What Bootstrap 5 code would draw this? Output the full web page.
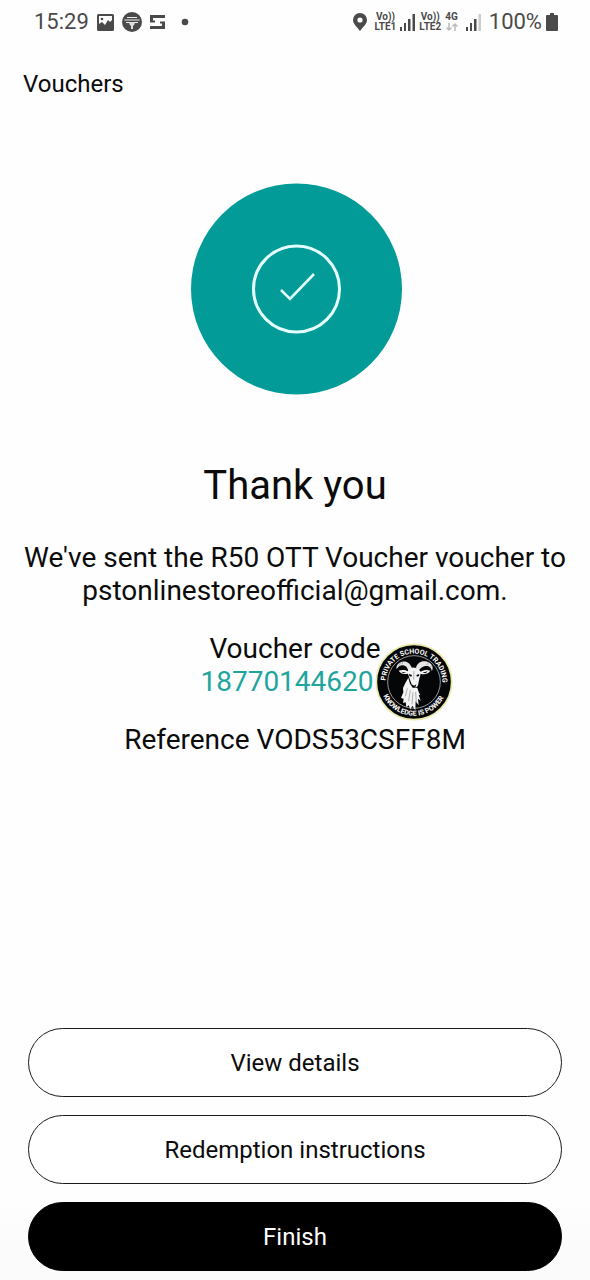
<!DOCTYPE html>
<html lang="en">
<head>
<meta charset="utf-8">
<meta name="viewport" content="width=device-width, initial-scale=1">
<title>Vouchers</title>
<link href="https://cdn.jsdelivr.net/npm/bootstrap@5.3.0/dist/css/bootstrap.min.css" rel="stylesheet">
<style>
  body { font-family: Roboto, "Noto Sans", sans-serif; color: #0b0b0b; background: #fefefe; }
  svg { display: block; flex: none; }
  .status-bar { height: 44px; padding: 0 32px 0 34px; color: #4a4a4a; }
  .status-text { font-size: 22px; line-height: 24px; }
  .status-stack { font-size: 10px; line-height: 10px; font-weight: 700; }
  .page-title { font-size: 24px; line-height: 32px; padding: 24px 23px 0; }
  .success-mark { width: 212px; height: 212px; margin: 83px auto 0; overflow: visible; }
  .headline { font-size: 40px; line-height: 48px; margin: 67px 0 31px; }
  .message { font-size: 28px; line-height: 33px; }
  .message p { margin-bottom: 25px; }
  .code-value { color: #1fa59d; padding-right: 16px; }
  .school-badge { left: 100%; top: 50%; width: 78px; height: 78px; transform: translate(-15px, -50%); }
  .actions { padding: 26px 28px 9px; background: linear-gradient(#fefefe 70%, #fafafa); }
  .btn-pill { --bs-btn-font-size: 24px; --bs-btn-line-height: 32px; --bs-btn-padding-y: 18px;
    --bs-btn-color: #0b0b0b; --bs-btn-border-color: #1a1a1a; --bs-btn-bg: #fff;
    --bs-btn-hover-bg: #eee; --bs-btn-hover-color: #000; height: 69px; }
  .btn-finish { --bs-btn-color: #fff; --bs-btn-bg: #000; --bs-btn-border-color: #000;
    --bs-btn-hover-bg: #222; --bs-btn-hover-color: #fff; }
  .action-list { gap: 18px; }
</style>
</head>
<body>
<div class="d-flex flex-column min-vh-100">
  <div class="status-bar d-flex align-items-center justify-content-between">
    <div class="d-flex align-items-center gap-2">
      <span class="status-text">15:29</span>
      <svg width="17" height="17" viewBox="0 0 17 17" aria-label="Picture"><path fill="#4a4a4a" fill-rule="evenodd" d="M1.500 0h14A1.500 1.500 0 0 1 17 1.500v14a1.500 1.500 0 0 1-1.500 1.500h-14A1.500 1.500 0 0 1 0 15.500v-14A1.500 1.500 0 0 1 1.500 0zM2 2v8l3-2 3 3 3-5 2 2 2-2V2z"/><circle cx="5" cy="5" r="1.300" fill="#4a4a4a"/></svg>
      <svg width="20" height="20" viewBox="0 0 20 20" aria-label="Bank app"><circle cx="10" cy="10" r="10" fill="#4a4a4a"/><path fill="none" stroke="#eee" stroke-width="1.200" d="M5 5.500h10M2.500 8h15M4 10.500h4v2M16 10.500h-4v2"/><path fill="#ddd" d="M8 10h4v3l-1 1v3H9v-3l-1-1z"/></svg>
      <svg width="15" height="14" viewBox="0 0 15 14" aria-label="Sync app"><path fill="none" stroke="#4a4a4a" stroke-width="3" d="M15 1.500H1.500V7M0 12.500h13.500V7"/><path stroke="#4a4a4a" stroke-width="2" d="M0 6.500h5M10 7.500h5"/></svg>
      <svg class="ms-2" width="8" height="8" viewBox="0 0 8 8"><circle cx="4" cy="4" r="3.300" fill="#4a4a4a"/></svg>
    </div>
    <div class="d-flex align-items-center gap-1">
      <svg class="me-1" width="14" height="18" viewBox="0 0 14 18" aria-label="Location"><path fill="#4a4a4a" fill-rule="evenodd" d="M7 0a7 7 0 0 1 7 7c0 4-4.500 7.500-7 11C4.500 14.500 0 11 0 7a7 7 0 0 1 7-7zm0 4.400a2.600 2.600 0 1 0 0 5.200 2.600 2.600 0 0 0 0-5.200z"/></svg>
      <span class="status-stack text-center">Vo))<br>LTE1</span>
      <svg width="15" height="17" viewBox="0 0 15 17" aria-label="Signal 1"><path fill="#4a4a4a" d="M0 13h2v4H0zM4 9h2v8H4zM8 5h2.500v12H8zM12.500 0H15v17h-2.500z"/></svg>
      <span class="status-stack text-center">Vo))<br>LTE2</span>
      <span class="status-stack text-center">4G
        <svg class="mx-auto" width="12" height="10" viewBox="0 0 12 10"><path fill="none" stroke="#bbb" stroke-width="1.500" d="M3 1v7M.5 5.500 3 8l2.500-2.500M9 9V2M6.500 4.500 9 2l2.500 2.500"/></svg>
      </span>
      <svg class="ms-1" width="15" height="17" viewBox="0 0 15 17" aria-label="Signal 2"><path fill="#4a4a4a" d="M0 13h2v4H0zM4 9h2v8H4zM8 5h2.500v12H8z"/><path fill="#ccc" d="M12.500 0H15v17h-2.500z"/></svg>
      <span class="status-text ms-1">100%</span>
      <svg width="12" height="18" viewBox="0 0 12 18" aria-label="Battery full"><path fill="#4a4a4a" d="M4 0h4v2h3a1 1 0 0 1 1 1v14a1 1 0 0 1-1 1H1a1 1 0 0 1-1-1V3a1 1 0 0 1 1-1h3z"/></svg>
    </div>
  </div>

  <header class="page-title">Vouchers</header>

  <main class="text-center">
    <svg class="success-mark" viewBox="0 0 212 212" role="img" aria-label="Success">
      <circle cx="107.500" cy="106" r="105.500" fill="#029b98"/>
      <circle cx="107.500" cy="106" r="43" fill="none" stroke="#e4ffff" stroke-width="3"/>
      <path d="m92 107 9 9 24-25" fill="none" stroke="#e4ffff" stroke-width="2.600"/>
    </svg>
    <h1 class="headline fw-normal">Thank you</h1>
    <div class="message px-3">
      <p>We've sent the R50 OTT Voucher voucher to pstonlinestoreofficial@gmail.com.</p>
      <p>Voucher code<br>
        <span class="code-value position-relative d-inline-block">18770144620<svg class="school-badge position-absolute" viewBox="1 2 234 234" role="img" aria-label="Private School Trading">
            <defs>
              <path id="arc-top" d="M36 141a85 85 0 1 1 164 0"/>
              <path id="arc-bottom" d="M17 119a101 101 0 0 0 202 0"/>
            </defs>
            <circle cx="118" cy="119" r="113" fill="#050608" stroke="#e9e9a8" stroke-width="5"/>
            <circle cx="118" cy="119" r="79" fill="none" stroke="#d8d8d8" stroke-width="2"/>
            <g fill="#fff" font-size="21" font-weight="700" text-anchor="middle">
              <text><textPath href="#arc-top" startOffset="51%">PRIVATE SCHOOL TRADING</textPath></text>
              <text><textPath href="#arc-bottom" startOffset="49%">KNOWLEDGE IS POWER</textPath></text>
            </g>
            <path fill="#e6e6e6" d="M112 78C106 60 90 52 74 62c-7 4-10 12-8 19 6-12 18-16 27-9 4 3 6 8 8 12zM124 76c4-17 22-25 40-15 10 6 13 16 7 26 0-12-10-18-22-15-8 2-13 8-17 13z"/>
            <path fill="#f4f4f4" d="M101 82c6-8 22-9 32 0l5 6c9-5 19-6 29-3-5 9-16 13-29 9l-4 15-4 20c-2 7-14 8-18 0l-7-19-5-16c-11 3-22 0-28-9 10-3 21-2 27 2z"/>
            <path fill="#f4f4f4" d="m101 106 5 18 8 12 14 0 4 13 5 10-5-2 6 18-8-6 2 20-9-12-1 27-9-14-6 11-5-12-7 6-2-15-8 2 2-13-8-2 7-17-1-13 7-15z"/>
            <path fill="#050608" d="m103 95 9 3-2 5-6-2zM134 95l-9 3 2 5 6-2zM111 126l7 4 7-4-3 8h-8zM80 88l15 3-9 2zM159 87l-16 4 10 2z"/>
            <path fill="none" stroke="#888" stroke-width="2" d="m98 138-6 24M107 144l-5 32M115 150l-3 36M123 149l2 34M72 71l5-8M82 66l2-8M156 68l5-7M166 74l7-4M118 86l-1 26"/>
          </svg></span></p>
      <p class="mb-0">Reference VODS53CSFF8M</p>
    </div>
  </main>

  <footer class="actions mt-auto">
    <div class="action-list d-grid">
      <button type="button" class="btn btn-pill rounded-pill">View details</button>
      <button type="button" class="btn btn-pill rounded-pill">Redemption instructions</button>
      <button type="button" class="btn btn-pill btn-finish rounded-pill">Finish</button>
    </div>
  </footer>
</div>
<script src="https://cdn.jsdelivr.net/npm/bootstrap@5.3.0/dist/js/bootstrap.bundle.min.js"></script>
</body>
</html>
